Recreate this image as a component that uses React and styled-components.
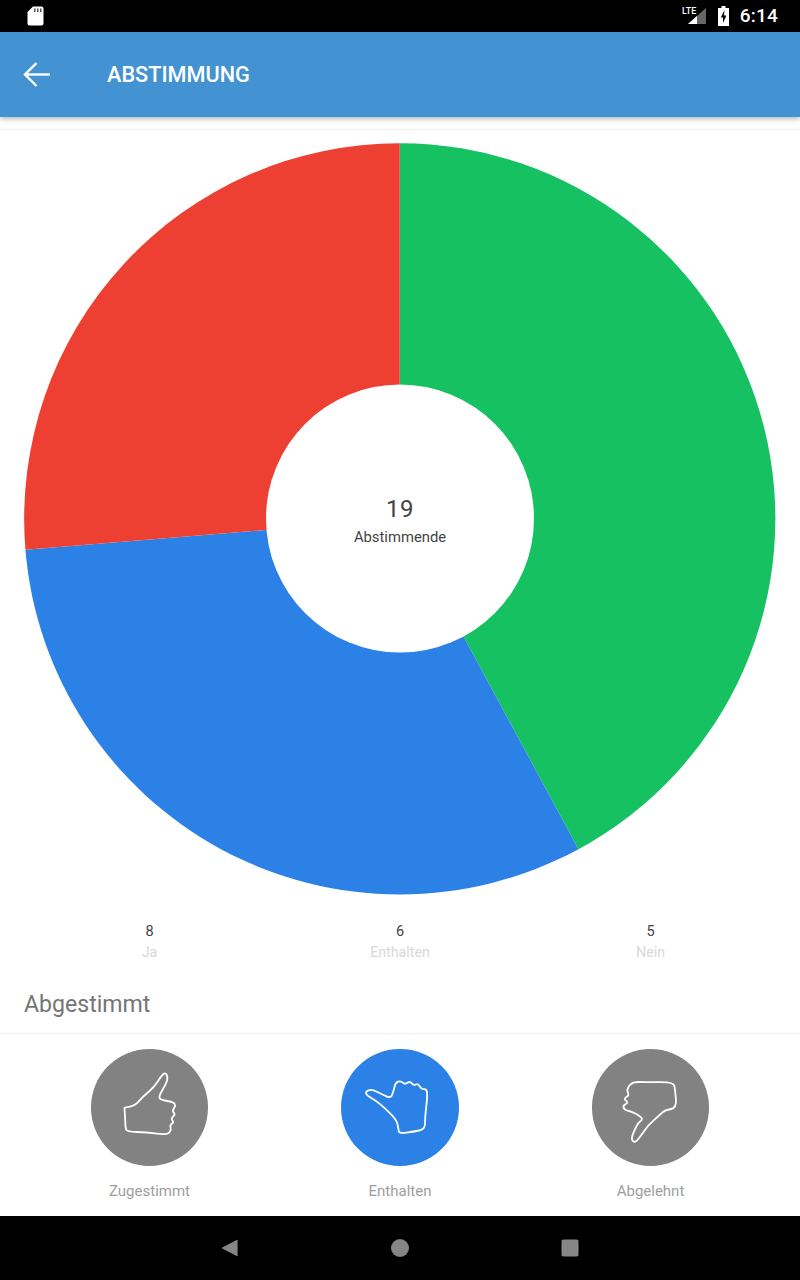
import React from "react";
import styled, { createGlobalStyle } from "styled-components";

const Global = createGlobalStyle`
  html, body { margin: 0; padding: 0; background: #fff; }
  body { font-family: Roboto, "Noto Sans", sans-serif; }
  * { box-sizing: border-box; }
`;

const Screen = styled.div`
  width: 800px;
  height: 1280px;
  display: flex;
  flex-direction: column;
  overflow: hidden;
  background: #fff;
`;

const StatusBar = styled.div`
  height: 32px;
  flex: none;
  background: #000;
  display: flex;
  align-items: center;
  padding: 0 22px 0 27px;
  color: #fff;
`;

const StatusRight = styled.div`
  margin-left: auto;
  display: flex;
  align-items: center;
`;

const Clock = styled.span`
  font-size: 19px;
  font-weight: 500;
  letter-spacing: 0.2px;
  margin-left: 11px;
  line-height: 32px;
`;

const BatteryIcon = styled.svg`
  margin-left: 11px;
`;

const AppBar = styled.header`
  height: 85px;
  flex: none;
  background: #4393d3;
  display: flex;
  align-items: center;
  padding-left: 22px;
  gap: 55px;
  box-shadow: 0 2px 5px rgba(0, 0, 0, 0.28);
  color: #fff;
  position: relative;
  z-index: 1;
`;

const Title = styled.h1`
  margin: 0;
  font-size: 21.7px;
  font-weight: 500;
  line-height: 28px;
`;

const ChartCard = styled.section`
  margin-top: 12px;
  border-top: 1px solid #eeeeee;
  padding: 13px 24px 0;
  flex: none;
`;

const PieWrap = styled.div`
  position: relative;
  width: 752px;
  height: 752px;
`;

const PieSvg = styled.svg`
  display: block;
`;

const PieCenter = styled.div`
  position: absolute;
  inset: 0;
  display: flex;
  flex-direction: column;
  align-items: center;
  justify-content: center;
  padding-top: 4px;
  color: #444;
`;

const PieNumber = styled.div`
  font-size: 24px;
  line-height: 28px;
  letter-spacing: 0.6px;
`;

const PieLabel = styled.div`
  font-size: 14.8px;
  line-height: 20px;
  margin-top: 4px;
`;

const Stats = styled.div`
  display: grid;
  grid-template-columns: repeat(3, 250.5px);
  justify-content: center;
  margin-top: 27px;
  flex: none;
`;

const Stat = styled.div`
  text-align: center;
`;

const StatValue = styled.div`
  font-size: 14.5px;
  line-height: 20px;
  color: #444;
`;

const StatLabel = styled.div`
  font-size: 14.2px;
  line-height: 20px;
  color: #d8d8d8;
`;

const SectionHead = styled.h2`
  margin: 0;
  padding: 13px 24px 0;
  height: 72px;
  display: flex;
  align-items: center;
  font-size: 23.1px;
  font-weight: 400;
  color: #757575;
  border-bottom: 1px solid #eeeeee;
  flex: none;
`;

const Votes = styled.div`
  display: grid;
  grid-template-columns: repeat(3, 250.5px);
  justify-content: center;
  padding-top: 15px;
  flex: none;
`;

const Vote = styled.div`
  display: flex;
  flex-direction: column;
  align-items: center;
`;

const VoteCircle = styled.div`
  width: 117.5px;
  height: 117px;
  border-radius: 50%;
  background: ${(p) => (p.$active ? "#2c81e6" : "#828282")};
`;

const VoteIcon = styled.svg`
  display: block;
  fill: none;
  stroke: #fff;
  stroke-width: 5.4;
  stroke-linejoin: round;
  stroke-linecap: round;
`;

const VoteLabel = styled.div`
  font-size: 15px;
  line-height: 20px;
  color: #9e9e9e;
  margin-top: 15px;
`;

const NavBar = styled.nav`
  margin-top: auto;
  height: 64px;
  flex: none;
  background: #000;
  display: grid;
  grid-template-columns: repeat(3, 170px);
  justify-content: center;
  align-items: center;
  justify-items: center;
  padding-bottom: 1px;
`;

const CX = 375.75;
const CY = 375.8;
const R = 375.6;
const HOLE = 134;
const TOTAL = 19;
const slices = [
  { value: 8, color: "#16c162" },
  { value: 6, color: "#2c81e6" },
  { value: 5, color: "#ee4032" },
];

const point = (r, a) => {
  const t = (a * Math.PI) / 180;
  return [CX + r * Math.sin(t), CY - r * Math.cos(t)];
};

const slicePath = (from, to) => {
  const [x1, y1] = point(R, from);
  const [x2, y2] = point(R, to);
  const large = to - from > 180 ? 1 : 0;
  return `M${CX} ${CY}L${x1} ${y1}A${R} ${R} 0 ${large} 1 ${x2} ${y2}Z`;
};

const smooth = (pts) => {
  const n = pts.length;
  const mid = (a, b) => [(a[0] + b[0]) / 2, (a[1] + b[1]) / 2];
  const start = mid(pts[n - 1], pts[0]);
  let d = `M${start[0]} ${start[1]}`;
  pts.forEach((p, i) => {
    const m = mid(p, pts[(i + 1) % n]);
    d += `Q${p[0]} ${p[1]} ${m[0]} ${m[1]}`;
  });
  return d + "Z";
};

const thumbUp = [
  [133, 203], [134, 203], [165, 197], [188, 170], [222, 142], [246, 104], [258, 98], [264, 118],
  [250, 145], [236, 170], [242, 180], [280, 186], [287, 198], [276, 212], [286, 224], [272, 236],
  [282, 247], [269, 256], [274, 268], [262, 285], [200, 277], [140, 275], [136, 262], [135, 230],
];
const thumbMid = [
  [106, 155], [124, 147], [160, 165], [182, 175], [191, 152], [196, 128], [212, 122], [224, 134],
  [240, 123], [250, 137], [264, 130], [274, 148], [290, 147], [292, 170], [285, 230], [285, 268],
  [250, 275], [208, 281], [205, 268], [200, 240], [165, 205], [135, 180], [110, 166],
];
const thumbDown = [
  [156, 125], [200, 127], [281, 126], [285, 150], [290, 204], [255, 210], [238, 226], [205, 255],
  [182, 288], [165, 309], [153, 298], [161, 275], [175, 247], [190, 237], [170, 222], [150, 214],
  [133, 210], [128, 196], [146, 188], [130, 176], [148, 166], [139, 150],
];

const votes = [
  { label: "Zugestimmt", pts: thumbUp, box: "33 27 352 351" },
  { label: "Enthalten", pts: thumbMid, box: "33 27 352 351", active: true },
  { label: "Abgelehnt", pts: thumbDown, box: "36 27 352 351" },
];

const stats = [
  { value: 8, label: "Ja" },
  { value: 6, label: "Enthalten" },
  { value: 5, label: "Nein" },
];

let acc = 0;
const arcs = slices.map((s) => {
  const from = (acc / TOTAL) * 360;
  acc += s.value;
  return { ...s, from, to: (acc / TOTAL) * 360 };
});

export default function App() {
  return (
    <Screen>
      <Global />
      <StatusBar>
        <svg width="17" height="20" viewBox="0 0 17 20" aria-hidden="true">
          <path d="M6 0.5H14.5A2 2 0 0 1 16.5 2.5V17.5A2 2 0 0 1 14.5 19.5H2.5A2 2 0 0 1 0.5 17.5V6Z" fill="#fff" />
          <path d="M7 2.5h1.5v3.5H7zM10 2.5h1.5v3.5H10zM13 2.5h1.5v3.5H13z" fill="#555" />
        </svg>
        <StatusRight>
          <svg width="25" height="22" viewBox="0 0 25 22" aria-hidden="true">
            <text x="0" y="9" fontSize="9" fontWeight="500" fontFamily="Roboto" fill="#fff">LTE</text>
            <path d="M6 19L24 3V19Z" fill="#666" />
            <path d="M6 19L15 11V19Z" fill="#fff" />
          </svg>
          <BatteryIcon width="11" height="20" viewBox="0 0 11 20" aria-hidden="true">
            <path d="M3.5 0H7.5V2H11V20H0V2H3.5Z" fill="#fff" />
            <path d="M6.5 4L2.8 11.5H5V17L8.4 9.5H6Z" fill="#000" />
          </BatteryIcon>
          <Clock>6:14</Clock>
        </StatusRight>
      </StatusBar>
      <AppBar>
        <svg width="30" height="30" viewBox="0 0 30 30" fill="none" stroke="#fff" strokeWidth="2.4" aria-hidden="true">
          <path d="M28 14.5H3.5" />
          <path d="M14.5 3L3 14.5L14.5 26" />
        </svg>
        <Title>ABSTIMMUNG</Title>
      </AppBar>
      <ChartCard>
        <PieWrap>
          <PieSvg width="752" height="752" viewBox="0 0 752 752" aria-hidden="true">
            {arcs.map((a) => (
              <path key={a.color} d={slicePath(a.from, a.to)} fill={a.color} />
            ))}
            <circle cx={376} cy={375.5} r={HOLE} fill="#fff" />
          </PieSvg>
          <PieCenter>
            <PieNumber>{TOTAL}</PieNumber>
            <PieLabel>Abstimmende</PieLabel>
          </PieCenter>
        </PieWrap>
      </ChartCard>
      <Stats>
        {stats.map((s) => (
          <Stat key={s.label}>
            <StatValue>{s.value}</StatValue>
            <StatLabel>{s.label}</StatLabel>
          </Stat>
        ))}
      </Stats>
      <SectionHead>Abgestimmt</SectionHead>
      <Votes>
        {votes.map((v) => (
          <Vote key={v.label}>
            <VoteCircle $active={v.active}>
              <VoteIcon width="117.5" height="117" viewBox={v.box} aria-hidden="true">
                <path d={smooth(v.pts)} />
              </VoteIcon>
            </VoteCircle>
            <VoteLabel>{v.label}</VoteLabel>
          </Vote>
        ))}
      </Votes>
      <NavBar>
        <svg width="18" height="18" viewBox="0 0 18 18" aria-hidden="true">
          <path d="M16 1.5V16.5L1.5 9Z" fill="#868686" stroke="#868686" strokeWidth="1.2" strokeLinejoin="round" />
        </svg>
        <svg width="18" height="18" viewBox="0 0 18 18" aria-hidden="true">
          <circle cx="9" cy="9" r="9" fill="#868686" />
        </svg>
        <svg width="18" height="18" viewBox="0 0 18 18" aria-hidden="true">
          <rect x="0.5" y="0.5" width="17" height="17" rx="2" fill="#868686" />
        </svg>
      </NavBar>
    </Screen>
  );
}
